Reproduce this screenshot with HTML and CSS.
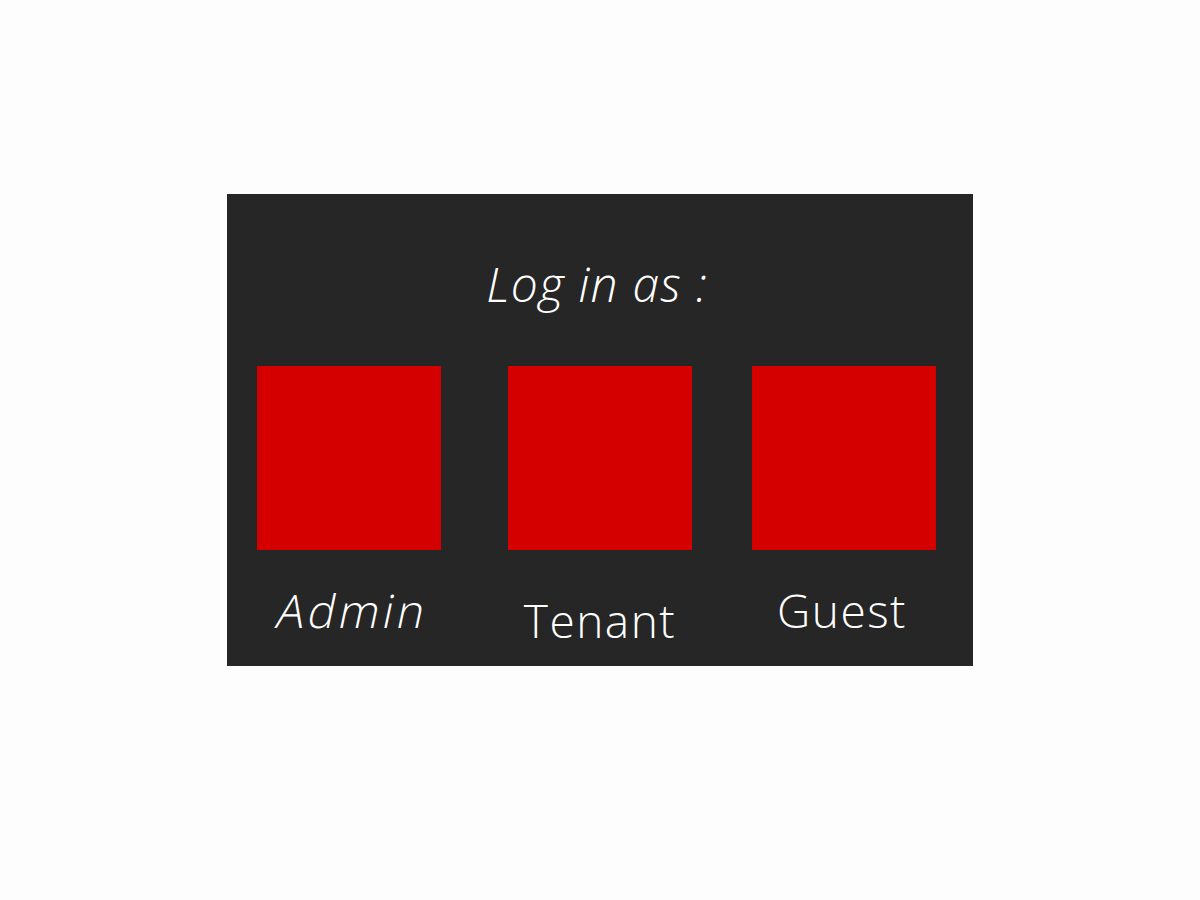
FILE: index.html
```html
<!DOCTYPE html>
<html lang="en">

<head>
    <meta charset="UTF-8">
    <title>Log in</title>
    <link rel="stylesheet" href="styles.css">
</head>

<body>
    <div class="panel">
        <h1 class="title">Log in as :</h1>
        <div class="roles">
            <a class="role role-admin" href="#">
                <span class="tile"></span>
                <span class="label">Admin</span>
            </a>
            <a class="role role-tenant" href="#">
                <span class="tile"></span>
                <span class="label">Tenant</span>
            </a>
            <a class="role role-guest" href="#">
                <span class="tile"></span>
                <span class="label">Guest</span>
            </a>
        </div>
    </div>
</body>

</html>
```

FILE: styles.css
```css
* {
    margin: 0;
    padding: 0;
    box-sizing: border-box;
}

body {
    background-color: #fdfdfd;
    font-family: "Open Sans", "DejaVu Sans", sans-serif;
    padding-top: 194px;
}

.panel {
    width: 746px;
    height: 472px;
    margin-left: 227px;
    background-color: #262626;
    color: #ffffff;
}

.title {
    padding-top: 60px;
    height: 172px;
    text-align: center;
    font-size: 48px;
    font-weight: 300;
    font-style: italic;
    letter-spacing: 1.2px;
    line-height: 60px;
    padding-right: 6px;
}

.roles {
    display: flex;
    padding-left: 30px;
}

.role {
    display: flex;
    flex-direction: column;
    align-items: center;
    width: 184px;
    color: #ffffff;
    text-decoration: none;
}

.role-admin {
    margin-right: 67px;
}

.role-tenant {
    margin-right: 60px;
}

.tile {
    width: 184px;
    height: 184px;
    background-color: #d40000;
}

.label {
    margin-top: 32px;
    font-size: 46px;
    font-weight: 300;
    line-height: 56px;
    letter-spacing: 1.5px;
}

.role-admin .label {
    transform: skewX(-12deg);
    letter-spacing: 3.5px;
    margin-left: 8px;
}

.role-tenant .label {
    margin-top: 42px;
}

.role-guest .label {
    margin-right: 4px;
}
```
